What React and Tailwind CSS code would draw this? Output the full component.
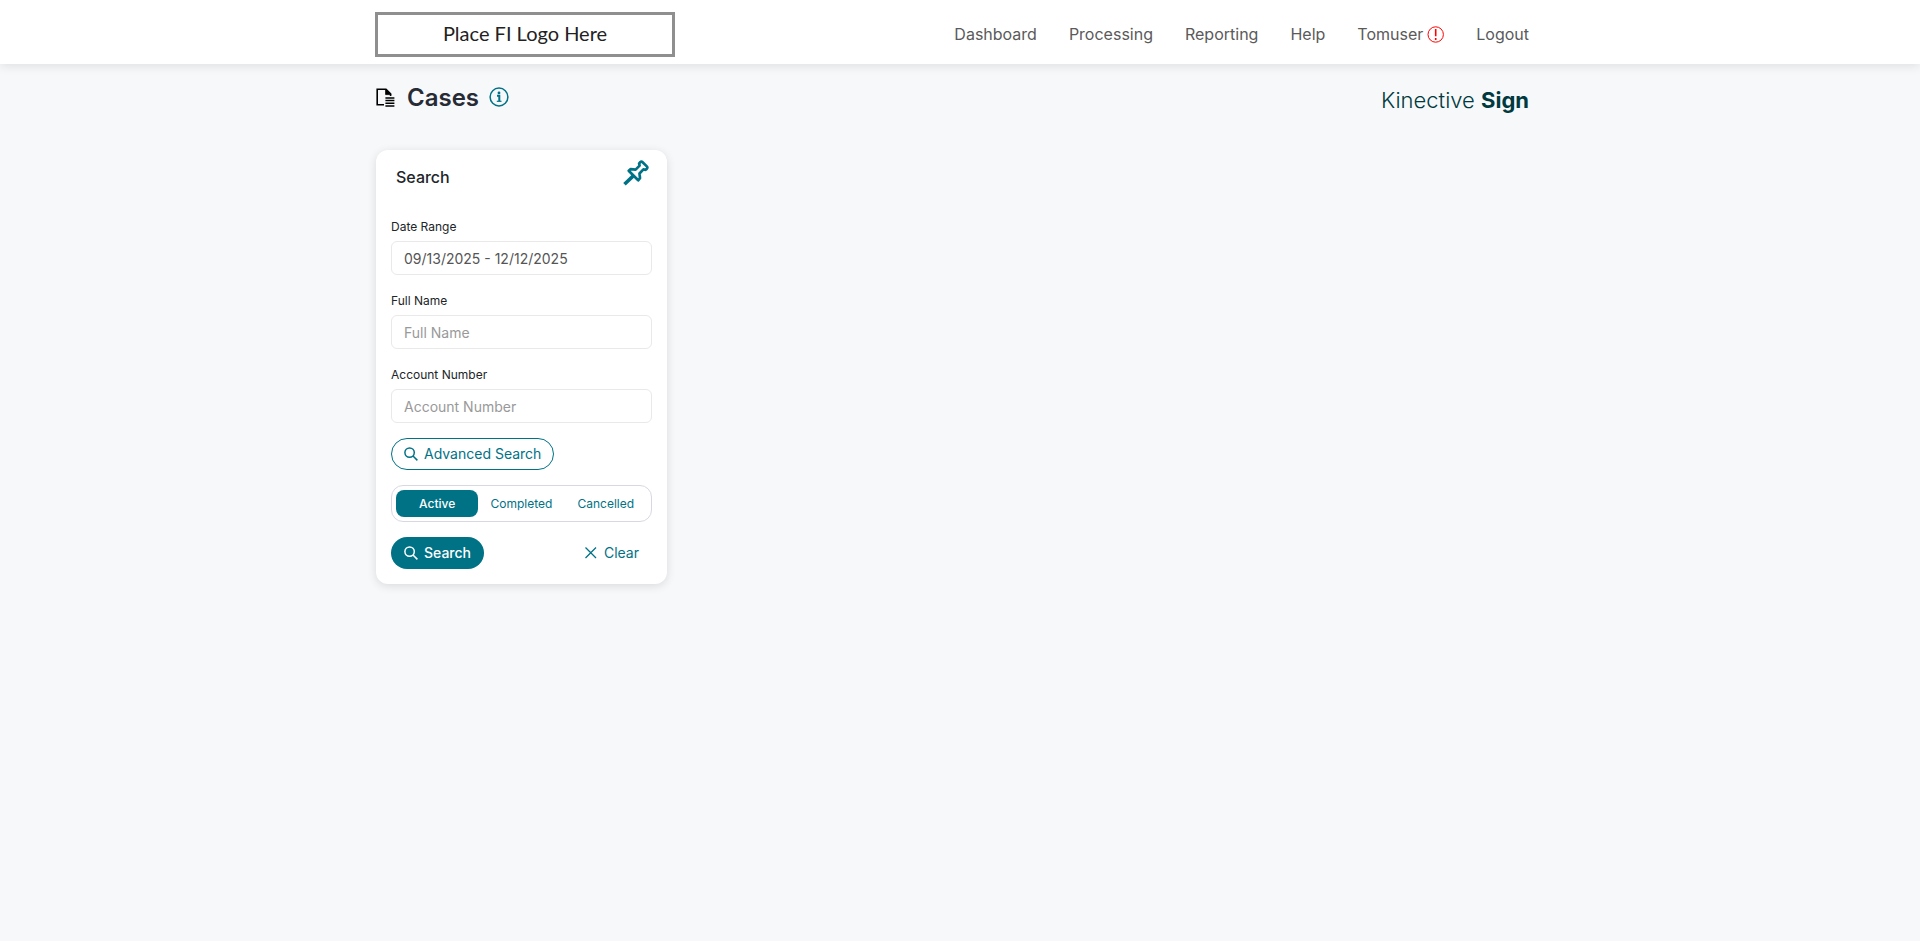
const navItems = ["Dashboard", "Processing", "Reporting", "Help"];

function SearchIcon() {
  return (
    <svg className="size-3.5 shrink-0" viewBox="0 0 14 14" fill="none" stroke="currentColor" strokeWidth="1.5" aria-hidden="true">
      <circle cx="5.6" cy="5.6" r="4.7" />
      <path d="M9 9l4.4 4.4" />
    </svg>
  );
}

function Field({ id, label, ...props }) {
  return (
    <div className="flex flex-col gap-1">
      <label htmlFor={id} className="text-xs leading-5 text-[#212529]">{label}</label>
      <input
        id={id}
        type="text"
        className="h-[34px] w-full rounded-md border border-[#e9e9e9] bg-white px-3 text-sm text-[#555555] outline-none placeholder:text-[#999999]"
        {...props}
      />
    </div>
  );
}

export default function App() {
  return (
    <div className="min-h-screen bg-[#f7f8fa] font-[Inter,sans-serif] text-[#212529]">
      <header className="bg-white shadow-[0_2px_10px_rgba(0,0,0,0.1)]">
        <div className="mx-auto flex h-16 max-w-[1170px] items-center justify-between pt-1 pr-4">
          <a href="#home" className="flex h-[45px] w-[300px] items-center justify-center border-3 border-[#8f8f8f] pb-0.5 font-[Lato,sans-serif] text-xl leading-6 text-[#222222]">
            Place FI Logo Here
          </a>
          <nav className="flex items-center gap-8 text-base text-[#5a5a5a]">
            {navItems.map((item) => (
              <a key={item} href={"#" + item.toLowerCase()}>{item}</a>
            ))}
            <a href="#user" className="flex items-center gap-1">
              Tomuser
              <svg className="size-[17px]" viewBox="0 0 17 17" fill="none" stroke="#ff0000" aria-hidden="true">
                <circle cx="8.7" cy="8.5" r="7.7" strokeWidth="1" />
                <path d="M8.7 3v7.2M8.7 12v2" strokeWidth="1.6" />
              </svg>
            </a>
            <a href="#logout">Logout</a>
          </nav>
        </div>
      </header>

      <main className="mx-auto max-w-[1170px] pr-4">
        <div className="flex h-[86px] items-start justify-between">
          <div className="flex items-center pt-3.5">
            <svg className="ml-px size-[19px]" viewBox="0 0 19 19" fill="none" stroke="#000000" aria-hidden="true">
              <path d="M8 16.8H1.2V1.2h8.8l4.6 4.6V8" strokeWidth="1.6" />
              <path d="M9.6 1v5.6h5.4z" fill="#000000" strokeWidth="0.8" />
              <path d="M9.4 9.9H18.4M9.4 12.6H18.4M9.4 15.3H18.4M9.4 18H18.4" strokeWidth="1.5" />
            </svg>
            <h1 className="ml-3 pt-0.5 text-2xl leading-9 font-semibold text-[#272b35]">Cases</h1>
            <button type="button" aria-label="About cases" className="ml-2.5 text-[#007286]">
              <svg className="size-5" viewBox="0 0 20 20" fill="none" stroke="currentColor" aria-hidden="true">
                <circle cx="10" cy="10" r="8.9" strokeWidth="1.5" />
                <circle cx="10" cy="5.9" r="1.4" fill="currentColor" stroke="none" />
                <path d="M8 8.8h2.3v5.2" strokeWidth="2" />
                <path d="M7.8 14.3h4.7" strokeWidth="1.2" />
              </svg>
            </button>
          </div>
          <div className="pt-[18px] text-[22px] leading-9 font-light text-[#003a40]">
            Kinective <span className="font-bold">Sign</span>
          </div>
        </div>

        <form
          onSubmit={(event) => event.preventDefault()}
          className="ml-px flex w-[291px] flex-col gap-[15px] rounded-xl bg-white px-[15px] pb-[15px] shadow-[0_2px_10px_rgba(0,0,0,0.12)]"
        >
          <div className="flex h-[52px] items-start justify-between pt-2 pr-[3px] pl-[5px]">
            <h2 className="pt-[7px] text-base leading-6 font-medium">Search</h2>
            <button type="button" aria-label="Pin search panel" className="pt-0.5 text-[#007286]">
              <svg className="size-[26px]" viewBox="0 0 26 26" fill="none" stroke="currentColor" strokeWidth="2.7" strokeLinejoin="round" aria-hidden="true">
                <path d="M17.2 2.2q1.2-1.2 2.4 0l4.2 4.2q1.2 1.2 0 2.4l-1.4 1-2-.4-3.9 4.1.5 4.6-1.8 2.2L5.7 10.8l2-1.7 4.9.5 4-4-.5-2z" />
                <path d="M10.8 15.4l-9.3 8.9" strokeWidth="3.6" />
              </svg>
            </button>
          </div>
          <div className="flex flex-col gap-4">
            <Field id="date-range" label="Date Range" defaultValue="09/13/2025 - 12/12/2025" />
            <Field id="full-name" label="Full Name" placeholder="Full Name" />
            <Field id="account-number" label="Account Number" placeholder="Account Number" />
          </div>
          <button type="button" className="flex h-8 items-center gap-1.5 self-start rounded-full border border-[#007286] px-3 text-sm text-[#007286]">
            <SearchIcon />
            Advanced Search
          </button>
          <div className="grid h-[37px] grid-cols-3 gap-0.5 rounded-xl border border-[#d8d8e2] p-1 text-xs text-[#007286]">
            <button type="button" aria-pressed="true" className="rounded-lg bg-[#007286] font-medium text-white">Active</button>
            <button type="button" aria-pressed="false" className="rounded-lg">Completed</button>
            <button type="button" aria-pressed="false" className="rounded-lg">Cancelled</button>
          </div>
          <div className="flex items-center justify-between">
            <button type="submit" className="flex h-8 items-center gap-1.5 rounded-full bg-[#007286] px-[13px] text-sm font-medium text-white">
              <SearchIcon />
              Search
            </button>
            <button type="reset" className="flex h-8 items-center gap-1.5 px-[13px] text-sm text-[#007286]">
              <svg className="size-3.5" viewBox="0 0 14 14" fill="none" stroke="currentColor" strokeWidth="1.3" aria-hidden="true">
                <path d="M1.5 1.5l10.5 10.5M12 1.5L1.5 12" />
              </svg>
              Clear
            </button>
          </div>
        </form>
      </main>
    </div>
  );
}
